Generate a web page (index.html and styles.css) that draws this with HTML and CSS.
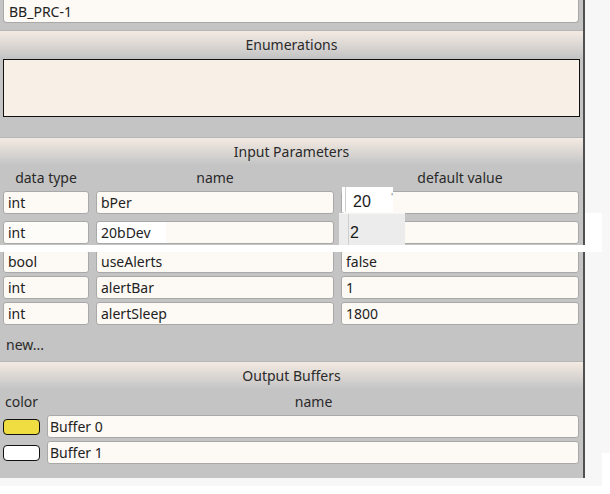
FILE: index.html
```html
<!DOCTYPE html>
<html>
<head>
  <meta charset="UTF-8">
  <title>Indicator properties</title>
  <meta name="viewport" content="width=device-width, initial-scale=1">
  <link rel="stylesheet" href="styles.css">
</head>
<body>

<div class="screen">
  <div class="panel">

    <!-- indicator name -->
    <div class="field top-field">BB_PRC-1</div>

    <div class="section-head enum-head">Enumerations</div>
    <div class="enum-box"></div>

    <div class="section-head params-head">Input Parameters</div>
    <div class="param-heads">
      <div>data type</div>
      <div>name</div>
      <div>default value</div>
    </div>

    <div class="param-row row-1">
      <div class="field">int</div>
      <div class="field">bPer</div>
      <div class="field"></div>
    </div>
    <div class="param-row row-2">
      <div class="field ghost">int</div>
      <div class="field ghost-part">20bDev</div>
      <div class="field"></div>
    </div>
    <div class="param-row row-3">
      <div class="field">bool</div>
      <div class="field">useAlerts</div>
      <div class="field">false</div>
    </div>
    <div class="param-row">
      <div class="field">int</div>
      <div class="field">alertBar</div>
      <div class="field">1</div>
    </div>
    <div class="param-row">
      <div class="field">int</div>
      <div class="field">alertSleep</div>
      <div class="field">1800</div>
    </div>

    <div class="new-link">new...</div>

    <div class="section-head buffers-head">Output Buffers</div>
    <div class="buffer-heads">
      <div>color</div>
      <div class="buffer-name-head">name</div>
    </div>
    <div class="buffer-row">
      <span class="swatch yellow"></span>
      <div class="field">Buffer 0</div>
    </div>
    <div class="buffer-row">
      <span class="swatch white"></span>
      <div class="field">Buffer 1</div>
    </div>
  </div>

  <!-- autocomplete popups left over on screen -->
  <div class="popup popup-one">20<span class="tick">'</span></div>
  <div class="popup popup-two">2</div>
  <div class="white-band"></div>
  <div class="white-side"></div>
</div>
<div class="side-strip"></div>

</body>
</html>
```

FILE: styles.css
```css
body{
  margin: 0;
  background-color: #ffffff;
  font-family: "Noto Sans", "Open Sans", sans-serif;
  font-size: 14px;
  color: #222;
}

.screen{
  position: relative;
  width: 602px;
  height: 486px;
  background-color: #f7f7f7;
}

.side-strip{
  position: absolute;
  top: 0;
  left: 602px;
  width: 8px;
  height: 453px;
  background-color: #f7f7f7;
}

.panel{
  box-sizing: border-box;
  width: 585px;
  height: 478px;
  padding: 0 4px 0 3px;
  background-color: #c4c4c4;
  border-right: 2px solid #505050;
  overflow: hidden;
}

/* text boxes */
.field{
  box-sizing: border-box;
  height: 23px;
  line-height: 21px;
  padding: 0 4px;
  background-color: #fdf9f4;
  border: 1px solid #a9a9a9;
  border-radius: 3px;
  white-space: nowrap;
  overflow: hidden;
}

.top-field{
  border-top: none;
  border-radius: 0 0 4px 4px;
  line-height: 23px;
  padding-left: 5px;
}

.section-head{
  height: 26px;
  line-height: 27px;
  margin: 0 -4px 0 -3px;
  text-align: center;
  color: #2a2a2a;
  background: linear-gradient(#f4eae2, #c6c6c6);
  border-top: 1px solid #b6b6b6;
}

.enum-head{
  margin-top: 7px;
}

.enum-box{
  box-sizing: border-box;
  height: 58px;
  margin: 2px -1px 0 0;
  background-color: #f8efe7;
  border: 1px solid #111;
}

.params-head{
  margin-top: 20px;
}

.param-heads{
  display: grid;
  grid-template-columns: 86px 1fr 1fr;
  column-gap: 7px;
  height: 27px;
  line-height: 28px;
  text-align: center;
  color: #2a2a2a;
}

.param-row{
  display: grid;
  grid-template-columns: 86px 1fr 1fr;
  column-gap: 7px;
  margin-top: 3px;
}

.row-1{
  margin-top: 0;
}

.row-2{
  margin-top: 7px;
}

.row-3{
  margin-top: 6px;
}

.ghost{
  background-color: #fefcf9;
}

.ghost-part{
  background: linear-gradient(to right, #ffffff 69px, #fdf9f4 69px);
}

.new-link{
  height: 36px;
  line-height: 40px;
  padding-left: 3px;
  color: #2a2a2a;
}

.buffers-head{
  margin-top: 0;
}

.buffer-heads{
  display: flex;
  height: 27px;
  line-height: 28px;
  color: #2a2a2a;
  padding-left: 2px;
}

.buffer-name-head{
  flex: 1;
  text-align: center;
  padding-left: 10px;
}

.buffer-row{
  display: flex;
  align-items: center;
  gap: 7px;
  margin-bottom: 3px;
}

.buffer-row .field{
  flex: 1;
  padding-left: 2px;
}

.swatch{
  box-sizing: border-box;
  width: 37px;
  height: 16px;
  border: 1px solid #111;
  border-radius: 4px;
}

.yellow{
  background-color: #f0dd42;
}

.white{
  background-color: #ffffff;
}

/* leftovers drawn over the form */
.popup{
  position: absolute;
  box-sizing: border-box;
  font-family: "Liberation Sans", Arial, sans-serif;
  font-size: 16px;
  color: #1a1a1a;
}

.popup-one{
  left: 342px;
  top: 187px;
  width: 51px;
  height: 25px;
  line-height: 29px;
  padding-left: 8px;
  background-color: #ffffff;
  border-left: 3px solid #ffffff;
  box-shadow: inset 1px 0 0 #d0d0d0;
}

.tick{
  position: absolute;
  right: 0;
  top: -4px;
  font-size: 11px;
  color: #888;
}

.popup-two{
  left: 339px;
  top: 213px;
  width: 66px;
  height: 35px;
  line-height: 38px;
  padding-left: 11px;
  background-color: #ececec;
  border-top: 1px solid #f6f6f6;
}

.popup-two::before{
  content: "";
  position: absolute;
  left: 9px;
  top: 0;
  bottom: 0;
  width: 1px;
  background-color: #cfcfcf;
}

.white-band{
  position: absolute;
  left: 0;
  top: 245px;
  width: 602px;
  height: 7px;
  background-color: #ffffff;
}

.white-side{
  position: absolute;
  left: 585px;
  top: 213px;
  width: 17px;
  height: 39px;
  background-color: #ffffff;
}
```
